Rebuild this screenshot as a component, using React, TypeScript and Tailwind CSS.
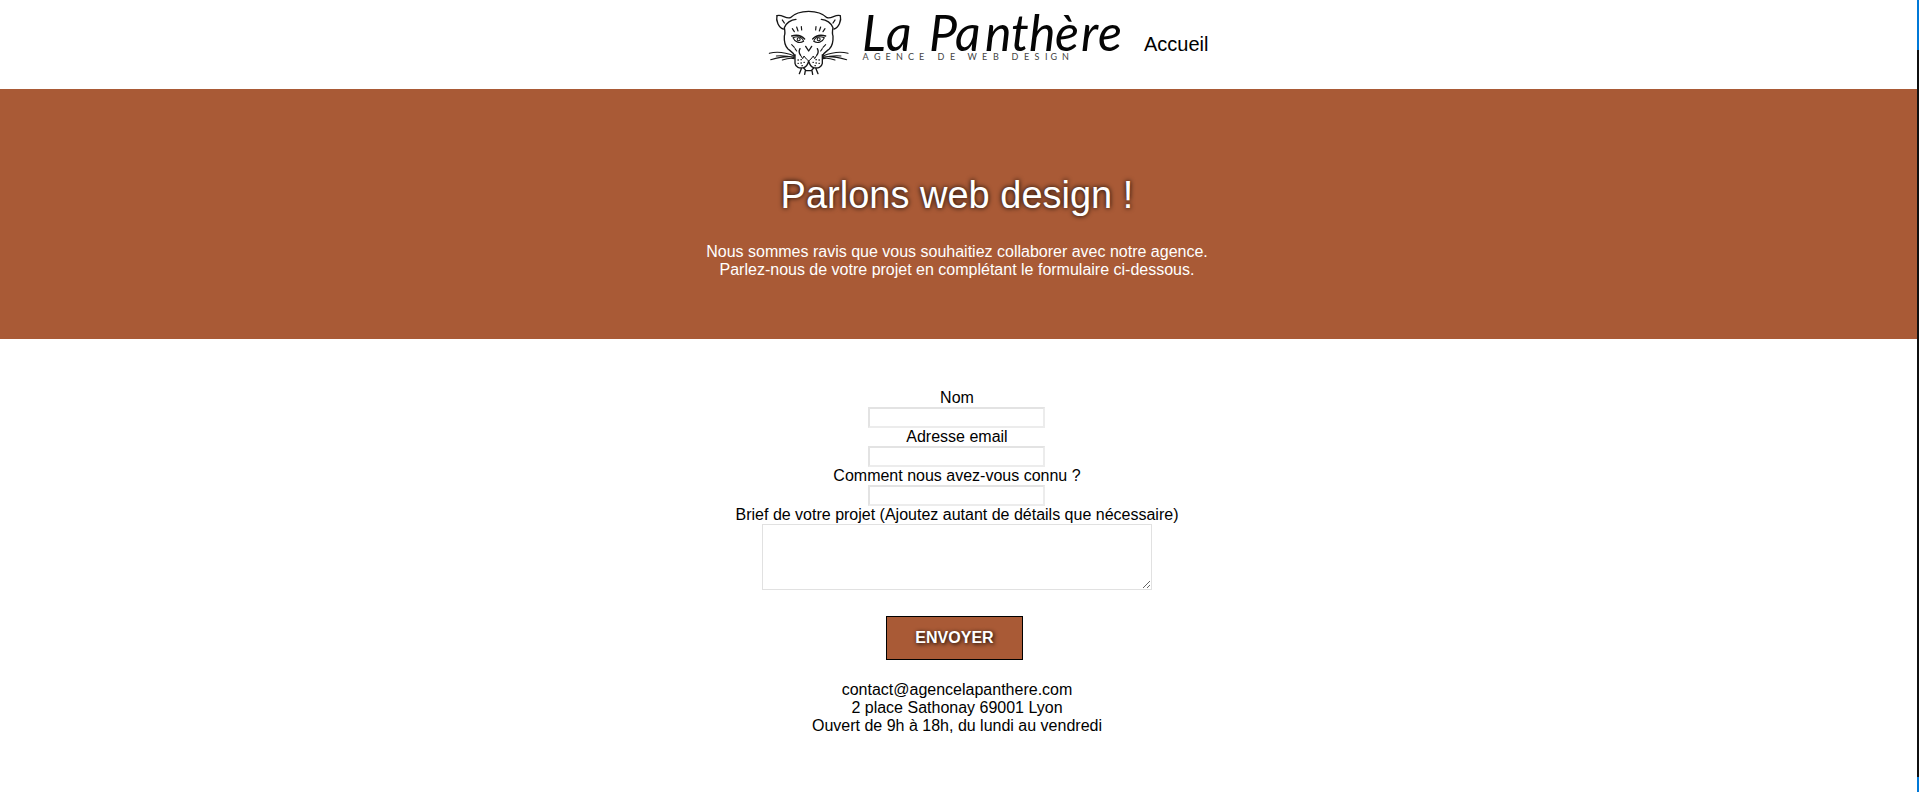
function PantherLogo() {
  return (
    <svg width="362" height="82" viewBox="0 0 362 82" className="block">
      <g transform="scale(0.33333)" fill="none" stroke="#161616" strokeWidth="4" strokeLinecap="round" strokeLinejoin="round">
        <path d="M51 47C66 42 76 57 91 53C104 40 122 34 146 34C170 34 188 40 201 53C216 57 226 42 241 47C245 62 236 83 222 87" />
        <path d="M51 47C47 62 56 83 70 87M67 60L73 69M225 60L219 69" />
        <path d="M108 58C93 59 78 69 73 83C75 93 76 101 73 108C72 124 74 137 84 147C93 154 100 158 104 167" />
        <path d="M184 58C199 59 214 69 219 83C217 93 216 101 219 108C220 124 218 137 208 147C199 154 192 158 188 167" />
        <path d="M97 86L103 95M110 81L114 93M124 80L125 90M195 86L189 95M182 81L178 93M168 80L167 90" strokeWidth="3.6" />
        <path d="M95 108C108 104 124 106 134 117M197 108C184 104 168 106 158 117" />
        <path d="M99 113C105 127 119 131 131 124C126 111 113 108 99 113ZM193 113C187 127 173 131 161 124C166 111 179 108 193 113Z" strokeWidth="3.2" />
        <circle cx="116" cy="118" r="4.5" strokeWidth="3.2" />
        <circle cx="176" cy="118" r="4.5" strokeWidth="3.2" />
        <path d="M95 134L103 142M105 146L110 153M197 134L189 142M187 146L182 153" strokeWidth="3.2" />
        <path d="M137 139L146 153L155 139" />
        <path d="M120 146C116 153 117 160 122 166M172 146C176 153 175 160 170 166" />
        <path d="M123 168L128 176L132 168L139 177L146 183L153 177L160 168L164 176L169 168" strokeWidth="3" />
        <path d="M105 164V190C107 202 118 206 131 203C141 200 144 191 146 183C148 191 151 200 161 203C174 206 185 202 187 190V164" />
        <path d="M131 204L138 212H154L161 204M124 206L118 221M136 212L134 223M156 212L158 223M168 206L174 221" />
        <path d="M28 160C53 153 81 159 103 168M32 179C56 172 82 168 103 171M49 168C72 166 88 169 103 173M67 180C81 175 94 173 103 176M264 160C239 153 211 159 189 168M260 179C236 172 210 168 189 171M243 168C220 166 204 169 189 173M225 180C211 175 198 173 189 176" strokeWidth="3.2" />
        <path d="M114 180h1M123 179h1M114 190h1M123 189h1M132 187h1M126 197h1M177 180h1M168 179h1M177 190h1M168 189h1M159 187h1M165 197h1" strokeWidth="4" />
      </g>
      <text x="102 126 150 169 195 225 251 269 295 321 338" y="51" fontFamily="Lato, sans-serif" fontStyle="italic" fontWeight="400" fontSize="50" fill="#050505">La Panthère</text>
      <text x="102.5 114 125.5 136 148 159 168 177.5 190 200 207.5 222 233 243 251.5 264 274.5 285 290.5 302" y="60" fontFamily="Lato, sans-serif" fontSize="9" fontWeight="400" fill="#444444">AGENCE DE WEB DESIGN</text>
    </svg>
  );
}

const fields = ["Nom", "Adresse email", "Comment nous avez-vous connu ?"];

export default function App() {
  return (
    <div className="flex h-[792px] w-full overflow-hidden bg-white font-['Liberation_Sans',Arial,sans-serif] text-base leading-[18px] text-black">
      <div className="min-w-0 flex-1">
        <header className="flex h-[89px] pl-[760px]">
          <PantherLogo />
          <a href="#" className="ml-[22px] mt-[33px] h-6 text-xl leading-[22px]">Accueil</a>
        </header>
        <section className="h-[250px] bg-[#a95a36] pr-[3px] pt-[84px] text-center text-white">
          <h1 className="text-[38px] leading-[44px] [text-shadow:0_0_5px_#000]">Parlons web design !</h1>
          <p className="mt-[26px]">
            Nous sommes ravis que vous souhaitiez collaborer avec notre agence.
            <br />
            Parlez-nous de votre projet en complétant le formulaire ci-dessous.
          </p>
        </section>
        <main className="flex flex-col items-center pr-[3px] pt-[50px]">
          <form className="flex flex-col items-center">
            {fields.map((label) => (
              <label key={label} className="flex flex-col items-center">
                {label}
                <input className="h-[21px] w-[177px] border-2 border-[#ececec] border-t-[#e3e3e3] border-l-[#e3e3e3] bg-white outline-none" />
              </label>
            ))}
            <label className="flex flex-col items-center">
              Brief de votre projet (Ajoutez autant de détails que nécessaire)
              <textarea className="block h-[66px] w-[390px] resize border border-[#e1e1e1] bg-white outline-none" />
            </label>
            <button type="button" className="mr-[5px] mt-[26px] h-11 w-[137px] border border-black bg-[#a95a36] font-bold text-white [text-shadow:1px_1px_4px_#000]">
              ENVOYER
            </button>
          </form>
          <address className="mt-[21px] text-center not-italic">
            contact@agencelapanthere.com
            <br />
            2 place Sathonay 69001 Lyon
            <br />
            Ouvert de 9h à 18h, du lundi au vendredi
          </address>
        </main>
      </div>
      <div className="flex w-0.5 flex-col bg-[#0078d7]">
        <div className="mt-[50px] h-[727px] bg-[#101010]" />
      </div>
    </div>
  );
}
